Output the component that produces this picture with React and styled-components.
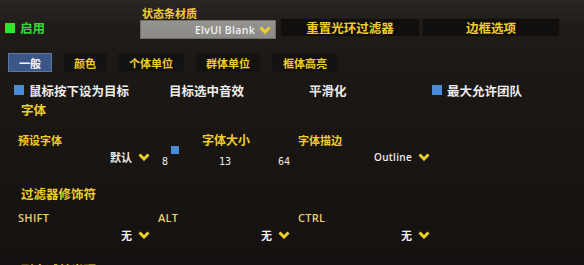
import React from "react";
import styled, { createGlobalStyle } from "styled-components";

const GlobalStyle = createGlobalStyle`
	html, body {
		margin: 0;
		padding: 0;
		background: #161311;
	}
	body {
		font-family: "Noto Sans CJK SC", "Noto Sans", sans-serif;
	}
`;

const YELLOW = "#efcd2c";
const WHITE = "#ececec";

function Chevron() {
	return (
		<svg width="12" height="8" viewBox="0 0 12 8">
			<polyline
				points="1.5,1.5 6,6 10.5,1.5"
				fill="none"
				stroke={YELLOW}
				strokeWidth="3"
				strokeLinejoin="miter"
			/>
		</svg>
	);
}

function Dropdown({ value, latin }) {
	return (
		<DropValue>
			<DropText $latin={latin}>{value}</DropText>
			<Chevron />
		</DropValue>
	);
}

const tabs = ["一般", "颜色", "个体单位", "群体单位", "框体高亮"];

function App() {
	return (
		<>
			<GlobalStyle />
			<Page>
				<Header>
					<Enable>
						<Box $color="#2ee62e" />
						<EnableText>启用</EnableText>
					</Enable>
					<TextureGroup>
						<SmallLabel>状态条材质</SmallLabel>
						<Select>
							<SelectText>ElvUI Blank</SelectText>
							<Chevron />
						</Select>
					</TextureGroup>
					<ActionButton $width={140}>重置光环过滤器</ActionButton>
					<ActionButton $width={138}>边框选项</ActionButton>
				</Header>

				<Tabs>
					{tabs.map((t, i) => (
						<Tab key={t} $active={i === 0}>
							{t}
						</Tab>
					))}
				</Tabs>

				<Options>
					<Option>
						<Box $color="#4a8bd6" />
						鼠标按下设为目标
					</Option>
					<Option>目标选中音效</Option>
					<Option>平滑化</Option>
					<Option>
						<Box $color="#4a8bd6" />
						最大允许团队
					</Option>
				</Options>

				<SectionTitle $top={6}>字体</SectionTitle>
				<FieldGrid $top={17}>
					<Field>
						<FieldLabel>预设字体</FieldLabel>
						<Dropdown value="默认" />
					</Field>
					<Slider>
						<SliderLabel>字体大小</SliderLabel>
						<Thumb />
						<SliderValues>
							<span>8</span>
							<span>13</span>
							<span>64</span>
						</SliderValues>
					</Slider>
					<Field>
						<FieldLabel>字体描边</FieldLabel>
						<Dropdown value="Outline" latin />
					</Field>
				</FieldGrid>

				<SectionTitle $top={20}>过滤器修饰符</SectionTitle>
				<FieldGrid $top={11}>
					{["SHIFT", "ALT", "CTRL"].map((k) => (
						<Field key={k}>
							<KeyLabel>{k}</KeyLabel>
							<Dropdown value="无" />
						</Field>
					))}
				</FieldGrid>

				<SectionTitle $top={21}>副本减益光环</SectionTitle>
			</Page>
		</>
	);
}

export default App;

const Page = styled.div`
	width: 584px;
	height: 265px;
	overflow: hidden;
	background: linear-gradient(#2a2622 0px, #1f1b18 30px, #1a1714 90px, #141110 265px);
	box-sizing: border-box;
`;

const Header = styled.div`
	display: flex;
	align-items: flex-start;
	padding-left: 5px;
	height: 40px;
`;

const Enable = styled.div`
	display: flex;
	align-items: center;
	gap: 5px;
	width: 135px;
	margin-top: 21px;
`;

const Box = styled.span`
	display: inline-block;
	width: 10px;
	height: 10px;
	background: ${(p) => p.$color};
	flex-shrink: 0;
`;

const EnableText = styled.span`
	color: #34d834;
	font-size: 12.5px;
	font-weight: 700;
	line-height: 14px;
`;

const TextureGroup = styled.div`
	display: flex;
	flex-direction: column;
	width: 136px;
	margin-top: 7px;
	margin-right: 4px;
`;

const SmallLabel = styled.div`
	color: ${YELLOW};
	font-size: 11px;
	font-weight: 700;
	line-height: 13px;
	padding-left: 2px;
`;

const Select = styled.div`
	display: flex;
	align-items: center;
	justify-content: flex-end;
	gap: 4px;
	height: 19px;
	padding-right: 5px;
	background: linear-gradient(#959490, #8a8985);
	box-shadow: inset 0 0 0 1px #6e6d6a;
`;

const SelectText = styled.span`
	color: #f2f2f2;
	font-family: "Open Sans", "Noto Sans", sans-serif;
	font-size: 10.5px;
	font-weight: 600;
	letter-spacing: 0.3px;
`;

const ActionButton = styled.div`
	width: ${(p) => p.$width}px;
	height: 19px;
	margin-top: 18px;
	margin-right: 2px;
	display: flex;
	align-items: center;
	justify-content: center;
	background: #110f0e;
	box-shadow: inset 0 0 0 1px #1d1a18;
	color: ${YELLOW};
	font-size: 12.5px;
	font-weight: 700;
`;

const Tabs = styled.div`
	display: flex;
	gap: 11px;
	padding-left: 8px;
	margin-top: 13px;
`;

const Tab = styled.div`
	height: 19px;
	padding: 0 10px;
	display: flex;
	align-items: center;
	box-sizing: border-box;
	font-size: 11px;
	font-weight: 700;
	color: ${(p) => (p.$active ? "#f4f4f4" : YELLOW)};
	background: ${(p) => (p.$active ? "#3b5687" : "#141210")};
	border: 1px solid ${(p) => (p.$active ? "#5877ad" : "#181614")};
`;

const Options = styled.div`
	display: grid;
	grid-template-columns: 155px 140px 123px auto;
	padding-left: 14px;
	margin-top: 11px;
`;

const Option = styled.div`
	display: flex;
	align-items: center;
	gap: 5px;
	height: 14px;
	color: ${WHITE};
	font-size: 12.5px;
	font-weight: 700;
	white-space: nowrap;
`;

const SectionTitle = styled.div`
	margin-top: ${(p) => p.$top}px;
	padding-left: 21px;
	height: 14px;
	line-height: 14px;
	color: ${YELLOW};
	font-size: 12.5px;
	font-weight: 700;
`;

const FieldGrid = styled.div`
	display: grid;
	grid-template-columns: repeat(3, 140px);
	padding-left: 18px;
	margin-top: ${(p) => p.$top}px;
`;

const Field = styled.div`
	display: flex;
	flex-direction: column;
`;

const FieldLabel = styled.div`
	color: ${YELLOW};
	font-size: 11px;
	font-weight: 700;
	line-height: 12px;
	height: 12px;
`;

const KeyLabel = styled.div`
	color: #e6cf6a;
	font-family: "Open Sans", "Noto Sans", sans-serif;
	font-size: 11px;
	font-weight: 600;
	letter-spacing: 0.3px;
	line-height: 12px;
	height: 12px;
`;

const DropValue = styled.div`
	display: flex;
	align-items: center;
	justify-content: flex-end;
	gap: 6px;
	padding-right: 8px;
	margin-top: 4px;
	height: 14px;
`;

const DropText = styled.span`
	color: ${WHITE};
	font-family: ${(p) =>
		p.$latin ? `"Open Sans", "Noto Sans", sans-serif` : `"Noto Sans CJK SC", sans-serif`};
	font-size: ${(p) => (p.$latin ? "10px" : "11px")};
	font-weight: ${(p) => (p.$latin ? 600 : 700)};
	letter-spacing: ${(p) => (p.$latin ? "0.3px" : "0")};
`;

const Slider = styled.div`
	position: relative;
	display: flex;
	flex-direction: column;
`;

const SliderLabel = styled.div`
	text-align: center;
	color: ${YELLOW};
	font-size: 12px;
	font-weight: 700;
	line-height: 12px;
	height: 12px;
	padding-right: 4px;
`;

const Thumb = styled.span`
	position: absolute;
	left: 13px;
	top: 12px;
	width: 8px;
	height: 8px;
	background: #4a8bd6;
`;

const SliderValues = styled.div`
	display: flex;
	justify-content: space-between;
	padding: 0 8px 0 4px;
	margin-top: 11px;
	color: ${WHITE};
	font-family: "DejaVu Sans Mono", monospace;
	font-size: 10px;
	line-height: 10px;

	span:nth-child(2) {
		margin-left: 4px;
	}
`;
